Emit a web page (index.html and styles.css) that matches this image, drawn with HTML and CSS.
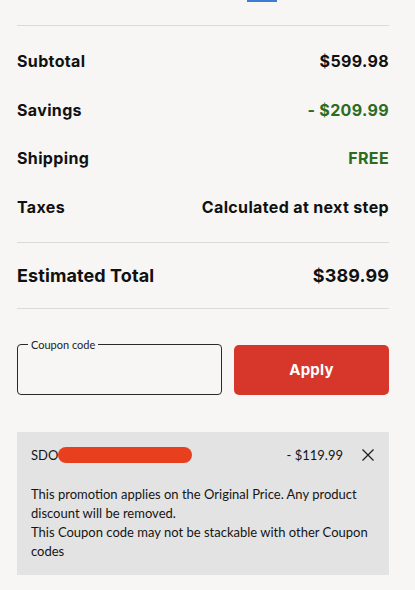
FILE: index.html
```html
<!DOCTYPE html>
<html lang="en">
<head>
<meta charset="utf-8">
<link rel="stylesheet" href="styles.css">
</head>
<body>
<div class="page">
  <div class="top-tab"></div>
  <hr class="sep sep-top">
  <div class="summary">
    <div class="row"><span class="label">Subtotal</span><span class="value">$599.98</span></div>
    <div class="row"><span class="label">Savings</span><span class="value green">- $209.99</span></div>
    <div class="row"><span class="label">Shipping</span><span class="value green">FREE</span></div>
    <div class="row"><span class="label">Taxes</span><span class="value">Calculated at next step</span></div>
  </div>
  <hr class="sep sep-mid">
  <div class="row total"><span class="label">Estimated Total</span><span class="value">$389.99</span></div>
  <hr class="sep sep-bottom">
  <div class="coupon">
    <fieldset class="coupon-field">
      <legend>Coupon code</legend>
      <input type="text" class="coupon-input" aria-label="Coupon code">
    </fieldset>
    <button class="apply">Apply</button>
  </div>
  <div class="promo">
    <div class="promo-head">
      <div class="promo-code">SDO<span class="redact"></span></div>
      <div class="promo-amount">- $119.99</div>
      <svg class="close" width="12" height="12" viewBox="0 0 12 12"><path d="M0.5 0.5 L11.5 11.5 M11.5 0.5 L0.5 11.5" stroke="#222" stroke-width="1.3" fill="none"/></svg>
    </div>
    <p class="promo-text">This promotion applies on the Original Price. Any product discount will be removed.<br>This Coupon code may not be stackable with other Coupon codes</p>
  </div>
</div>
</body>
</html>
```
FILE: styles.css
```css
* { box-sizing: border-box; }
html, body { margin: 0; padding: 0; }
body {
  background: #f7f6f4;
  font-family: Inter, "Noto Sans", sans-serif;
  color: #111;
  width: 415px;
  height: 590px;
  overflow: hidden;
}
.page {
  padding: 0 26px 0 17px;
}
.top-tab {
  width: 30px;
  height: 2px;
  margin-left: 230px;
  background: #3d7bd6;
}
.sep {
  border: 0;
  border-top: 1px solid #dcdbd9;
  margin: 0;
}
.sep-top { margin-top: 23px; }
.summary {
  display: flex;
  flex-direction: column;
  gap: 24.6px;
  padding-top: 23px;
}
.row {
  display: flex;
  justify-content: space-between;
  align-items: center;
  height: 24px;
  font-size: 16px;
  font-weight: 700;
  letter-spacing: 0.35px;
}
.green { color: #2d6b1f; }
.sep-mid { margin-top: 23px; }
.total {
  height: 65px;
  font-size: 18px;
  letter-spacing: 0.1px;
}
.sep-bottom { margin-bottom: 30px; }
.coupon {
  display: flex;
  gap: 12px;
  align-items: flex-end;
}
.coupon-field {
  width: 205px;
  height: 56px;
  margin: 0;
  padding: 0 10px;
  border: 1px solid #2a2a2a;
  border-radius: 4px;
}
.coupon-field legend {
  font-family: Lato, sans-serif;
  font-size: 11px;
  font-weight: 400;
  padding: 0 3px;
  color: #222;
  line-height: 12px;
}
.coupon-input {
  border: 0;
  background: transparent;
  width: 100%;
  height: 40px;
  outline: none;
}
.apply {
  flex: 1;
  height: 50px;
  border: 0;
  border-radius: 5px;
  background: #d6372a;
  color: #fff;
  font-family: inherit;
  font-size: 15px;
  font-weight: 700;
  letter-spacing: 0.2px;
}
.promo {
  margin-top: 37px;
  background: #e3e3e3;
  padding: 14px;
  height: 143px;
  font-family: Lato, sans-serif;
  color: #151515;
}
.promo-head {
  display: flex;
  align-items: center;
  height: 18px;
  font-size: 13px;
}
.promo-code {
  flex: 1;
  display: flex;
  align-items: center;
}
.redact {
  display: inline-block;
  width: 134px;
  height: 16px;
  border-radius: 8px;
  background: #e8401f;
}
.promo-amount { margin-right: 19px; }
.close { margin-right: 1px; }
.promo-text {
  margin: 21px 0 0;
  font-size: 13px;
  line-height: 19px;
}
```
